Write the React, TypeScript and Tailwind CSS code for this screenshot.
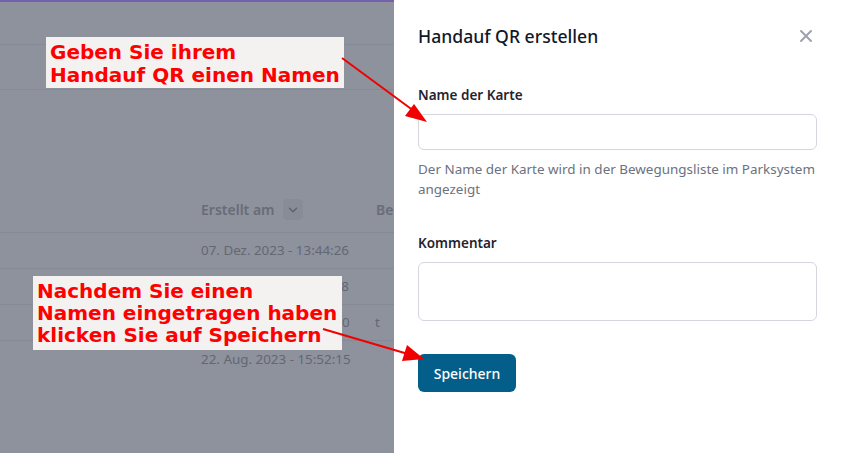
import React from "react";

const ui = { fontFamily: '"Noto Sans", "Open Sans", sans-serif' };
const anno = { fontFamily: '"DejaVu Sans", sans-serif' };

function Chevron() {
  return (
    <svg width="14" height="14" viewBox="0 0 24 24" fill="none" stroke="#5f636e" strokeWidth="2.5" strokeLinecap="round" strokeLinejoin="round">
      <path d="M6 9l6 6 6-6" />
    </svg>
  );
}

function Backdrop() {
  return (
    <div className="relative flex-1 h-full overflow-hidden bg-[#8e929d] text-[13.4px] text-[#636772]" style={ui}>
      <div className="h-[2px] bg-[#7461ad]" />
      <div className="h-[43px] border-b border-[#868a95]" />
      <div className="h-[45px] border-b border-[#868a95]" />
      <div className="h-[97px]" />
      <div className="h-[46px] flex items-center border-b border-[#868a95] whitespace-nowrap">
        <div className="w-[201px] shrink-0" />
        <div className="w-[175px] shrink-0 flex items-center gap-[8px] text-[14px] font-semibold text-[#686c77]">
          <span>Erstellt am</span>
          <span className="w-[20px] h-[21px] rounded bg-[#888c97] flex items-center justify-center">
            <Chevron />
          </span>
        </div>
        <div className="text-[14px] font-semibold text-[#686c77]">Be</div>
      </div>
      {[
        ["07. Dez. 2023 - 13:44:26", ""],
        ["07. Dez. 2023 - 13:40:18", ""],
        ["29. Nov. 2023 - 10:12:50", "t"],
        ["22. Aug. 2023 - 15:52:15", ""],
      ].map(([d, b], i) => (
        <div key={i} className={`h-[36px] flex items-center whitespace-nowrap ${i < 3 ? "border-b border-[#868a95]" : ""}`}>
          <div className="w-[201px] shrink-0" />
          <div className="w-[174px] shrink-0">{d}</div>
          <div>{b}</div>
        </div>
      ))}
    </div>
  );
}

function Panel() {
  return (
    <div className="w-[447px] h-full bg-white px-6 flex flex-col shrink-0" style={ui}>
      <div className="h-[73px] flex items-center justify-between">
        <div className="text-[17.6px] font-medium text-[#111827]">Handauf QR erstellen</div>
        <div className="w-6 h-6 flex items-center justify-center -mt-[2px] -mr-[1px]">
          <svg width="14" height="14" viewBox="0 0 14 14" fill="none" stroke="#9ca1ad" strokeWidth="2" strokeLinecap="round">
            <path d="M2 2l10 10M12 2L2 12" />
          </svg>
        </div>
      </div>
      <div className="mt-[12px] text-[13.5px] leading-[20px] font-semibold text-[#1f2430]">Name der Karte</div>
      <div className="mt-[9px] h-[36px] rounded-[6px] border border-[#d6d5df]" />
      <div className="mt-[9px] text-[13.45px] leading-[20px] text-[#6b7280] whitespace-nowrap">
        <div>Der Name der Karte wird in der Bewegungsliste im Parksystem</div>
        <div>angezeigt</div>
      </div>
      <div className="mt-[34px] text-[13.5px] leading-[20px] font-semibold text-[#1f2430]">Kommentar</div>
      <div className="mt-[9px] h-[59px] rounded-[6px] border border-[#d6d5df]" />
      <div className="mt-[33px]">
        <button className="w-[98px] h-[38px] rounded-[6px] bg-[#035e89] text-white text-[14px] font-medium">
          Speichern
        </button>
      </div>
    </div>
  );
}

function Overlay() {
  return (
    <div className="absolute inset-0 pointer-events-none">
      <div
        className="absolute left-[46px] top-[37px] w-[298px] h-[51px] bg-[#f4f2f1] pl-[4px] pt-[4px] text-[20px] leading-[23px] font-bold text-[#ff0000] whitespace-nowrap"
        style={anno}
      >
        <div>Geben Sie ihrem</div>
        <div>Handauf QR einen Namen</div>
      </div>
      <div
        className="absolute left-[33px] top-[276px] w-[309px] h-[74px] bg-[#f4f2f1] pl-[4px] pt-[4px] text-[20px] leading-[22px] font-bold text-[#ff0000] whitespace-nowrap"
        style={anno}
      >
        <div>Nachdem Sie einen</div>
        <div>Namen eingetragen haben</div>
        <div>klicken Sie auf Speichern</div>
      </div>
      <svg className="absolute inset-0" width="841" height="453" viewBox="0 0 841 453">
        <line x1="342" y1="58" x2="414" y2="111" stroke="#f00000" strokeWidth="2" />
        <polygon points="427,122 405,116 414,104" fill="#f00000" />
        <line x1="323" y1="329" x2="408" y2="354" stroke="#f00000" strokeWidth="2" />
        <polygon points="424,359 402,361 407,345" fill="#f00000" />
      </svg>
    </div>
  );
}

export default function App() {
  return (
    <div className="relative w-[841px] h-[453px] overflow-hidden flex">
      <Backdrop />
      <Panel />
      <Overlay />
    </div>
  );
}
